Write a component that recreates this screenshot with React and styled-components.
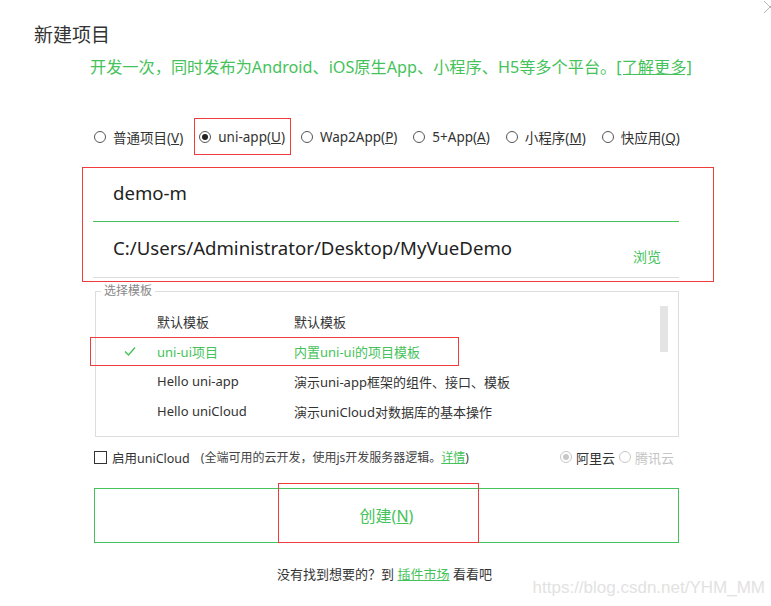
import React from "react";
import styled, { createGlobalStyle } from "styled-components";

const GREEN = "#45c25a";
const RED = "#ee3b3b";
const TEXT = "#333333";

const GlobalStyle = createGlobalStyle`
  html, body {
    margin: 0;
    padding: 0;
    background: #ffffff;
  }
  body {
    font-family: "Noto Sans", "Noto Sans CJK SC", sans-serif;
    color: ${TEXT};
  }
  * { box-sizing: border-box; }
`;

const Page = styled.div`
  position: relative;
  width: 771px;
  height: 606px;
  overflow: hidden;
  background: #fff;
`;

const CloseIcon = styled.svg`
  position: absolute;
  top: 0;
  right: -6px;
  width: 14px;
  height: 14px;
`;

const Title = styled.h1`
  margin: 0;
  padding: 22px 0 0 34px;
  font-size: 19px;
  font-weight: normal;
  line-height: 26px;
  color: #333;
`;

const Subtitle = styled.p`
  margin: 0;
  padding: 9px 0 0 90px;
  font-size: 16.2px;
  line-height: 20px;
  color: ${GREEN};
`;

const MoreLink = styled.a`
  color: ${GREEN};
  text-decoration: underline;
`;

const RadioRow = styled.div`
  display: flex;
  align-items: center;
  gap: 16px;
  margin-top: 50px;
  padding-left: 94px;
  height: 20px;
  font-size: 13.5px;
`;

const RadioItem = styled.label`
  position: relative;
  display: flex;
  align-items: center;
  gap: 7px;
  white-space: nowrap;
  color: #333;
  &::after {
    content: "";
    display: ${(p) => (p.$marked ? "block" : "none")};
    position: absolute;
    left: -5px;
    right: -6px;
    top: -10px;
    bottom: -9px;
    border: 1px solid ${RED};
  }
`;

const RadioCircle = styled.span`
  width: 12px;
  height: 12px;
  border-radius: 50%;
  border: 1px solid ${(p) => (p.$light ? "#c8c8c8" : "#555")};
  display: flex;
  align-items: center;
  justify-content: center;
  flex-shrink: 0;
  background: #fff;
  &::before {
    content: "";
    display: ${(p) => (p.$on ? "block" : "none")};
    width: 6px;
    height: 6px;
    border-radius: 50%;
    background: ${(p) => (p.$light ? "#c8c8c8" : "#222")};
  }
`;

const Key = styled.span`
  text-decoration: underline;
`;

const InputPanel = styled.div`
  margin: 20px 0 0 82px;
  width: 632px;
  height: 115px;
  border: 1px solid ${RED};
  padding: 0 34px 0 10px;
`;

const Field = styled.div`
  display: flex;
  align-items: center;
  justify-content: space-between;
  height: ${(p) => p.$h}px;
  border-bottom: 1px solid ${(p) => (p.$active ? GREEN : "#dddddd")};
  padding: 0 18px 0 20px;
  font-size: 18.6px;
  color: #222;
`;

const FieldText = styled.span`
  padding-bottom: ${(p) => p.$pb || 0}px;
`;

const Browse = styled.span`
  font-size: 14px;
  color: ${GREEN};
  padding-top: 12px;
`;

const TemplateBox = styled.fieldset`
  position: relative;
  margin: 2px 0 0 95px;
  width: 584px;
  min-width: 0;
  padding: 8px 0 10px;
  border: 1px solid #dddddd;
`;

const Legend = styled.legend`
  margin-left: 5px;
  padding: 0 3px;
  font-size: 12px;
  line-height: 14px;
  color: #888;
`;

const TemplateRow = styled.div`
  position: relative;
  display: grid;
  grid-template-columns: 61px 137px 1fr;
  align-items: center;
  height: 30px;
  font-size: 13px;
  color: ${(p) => (p.$active ? GREEN : "#333")};
  &::after {
    content: "";
    display: ${(p) => (p.$marked ? "block" : "none")};
    position: absolute;
    left: -6px;
    width: 367px;
    top: 1px;
    bottom: 0;
    border: 1px solid ${RED};
  }
`;

const CheckCell = styled.span`
  display: flex;
  padding-left: 28px;
`;

const Scrollbar = styled.div`
  position: absolute;
  right: 10px;
  top: 8px;
  width: 8px;
  height: 46px;
  background: #e4e4e4;
`;

const CloudRow = styled.div`
  display: flex;
  align-items: center;
  justify-content: space-between;
  margin: 12px 0 0 94px;
  width: 580px;
  height: 16px;
  font-size: 12.5px;
`;

const CloudLeft = styled.div`
  display: flex;
  align-items: center;
  gap: 5px;
`;

const Checkbox = styled.span`
  width: 13px;
  height: 13px;
  border: 1px solid #333;
  background: #fff;
`;

const Note = styled.span`
  margin-left: 6px;
  font-size: 12px;
  color: #444;
`;

const GreenLink = styled.a`
  color: ${GREEN};
  text-decoration: underline;
`;

const CloudRight = styled.div`
  display: flex;
  align-items: center;
  gap: 4px;
  font-size: 13px;
`;

const Provider = styled.span`
  color: ${(p) => (p.$disabled ? "#c4c4c4" : "#333")};
`;

const CreateButton = styled.button`
  position: relative;
  display: flex;
  align-items: center;
  justify-content: center;
  margin: 23px 0 0 94px;
  width: 585px;
  height: 55px;
  border: 1px solid ${GREEN};
  background: #fff;
  font-family: inherit;
  font-size: 16px;
  color: ${GREEN};
  padding-bottom: 3px;
  &::after {
    content: "";
    position: absolute;
    left: 183px;
    top: -6px;
    width: 199px;
    height: 58px;
    border: 1px solid ${RED};
  }
`;

const Footer = styled.div`
  margin-top: 21px;
  text-align: center;
  font-size: 13px;
  color: #333;
  padding-right: 2px;
`;

const Watermark = styled.div`
  position: absolute;
  right: 6px;
  bottom: 8px;
  font-family: "Liberation Sans", Arial, sans-serif;
  font-size: 17px;
  color: #e2e2e2;
`;

const templates = [
  { name: "默认模板", desc: "默认模板" },
  { name: "uni-ui项目", desc: "内置uni-ui的项目模板", active: true },
  { name: "Hello uni-app", desc: "演示uni-app框架的组件、接口、模板" },
  { name: "Hello uniCloud", desc: "演示uniCloud对数据库的基本操作" },
];

const types = [
  { label: "普通项目", key: "V" },
  { label: "uni-app", key: "U", on: true },
  { label: "Wap2App", key: "P" },
  { label: "5+App", key: "A" },
  { label: "小程序", key: "M" },
  { label: "快应用", key: "Q" },
];

export default function App() {
  return (
    <>
      <GlobalStyle />
      <Page>
        <CloseIcon viewBox="0 0 14 14">
          <path d="M1 1 L13 13 M13 1 L1 13" stroke="#b5b5b5" strokeWidth="1" fill="none" />
        </CloseIcon>
        <Title>新建项目</Title>
        <Subtitle>
          开发一次，同时发布为Android、iOS原生App、小程序、H5等多个平台。
          <MoreLink>[了解更多]</MoreLink>
        </Subtitle>

        <RadioRow>
          {types.map((t) => (
            <RadioItem key={t.key} $marked={t.on}>
              <RadioCircle $on={t.on} />
              <span>
                {t.label}(<Key>{t.key}</Key>)
              </span>
            </RadioItem>
          ))}
        </RadioRow>

        <InputPanel>
          <Field $h={54} $active>
            <FieldText $pb={5}>demo-m</FieldText>
          </Field>
          <Field $h={56}>
            <FieldText $pb={5}>C:/Users/Administrator/Desktop/MyVueDemo</FieldText>
            <Browse>浏览</Browse>
          </Field>
        </InputPanel>

        <TemplateBox>
          <Legend>选择模板</Legend>
          <Scrollbar />
          {templates.map((t) => (
            <TemplateRow key={t.name} $active={t.active} $marked={t.active}>
              <CheckCell>
                {t.active && (
                  <svg width="12" height="10" viewBox="0 0 12 10">
                    <path d="M1 5.5 L4.5 9 L11 1.5" stroke={GREEN} strokeWidth="1.4" fill="none" />
                  </svg>
                )}
              </CheckCell>
              <span>{t.name}</span>
              <span>{t.desc}</span>
            </TemplateRow>
          ))}
        </TemplateBox>

        <CloudRow>
          <CloudLeft>
            <Checkbox />
            <span>启用uniCloud</span>
            <Note>
              (全端可用的云开发，使用js开发服务器逻辑。<GreenLink>详情</GreenLink>)
            </Note>
          </CloudLeft>
          <CloudRight>
            <RadioCircle $on $light />
            <Provider>阿里云</Provider>
            <RadioCircle $light />
            <Provider $disabled>腾讯云</Provider>
          </CloudRight>
        </CloudRow>

        <CreateButton>
          <span>
            创建(<Key>N</Key>)
          </span>
        </CreateButton>

        <Footer>
          没有找到想要的？到 <GreenLink>插件市场</GreenLink> 看看吧
        </Footer>

        <Watermark>https://blog.csdn.net/YHM_MM</Watermark>
      </Page>
    </>
  );
}
